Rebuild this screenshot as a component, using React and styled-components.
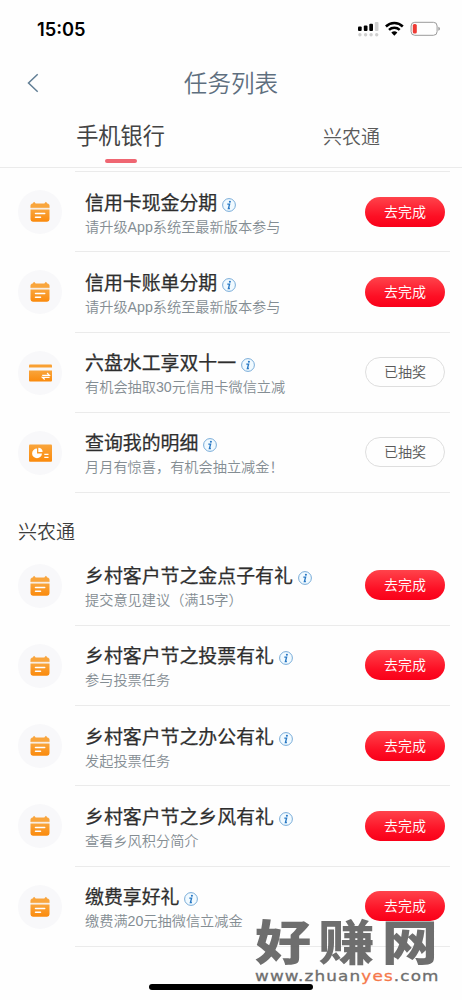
import React from "react";
import styled, { createGlobalStyle } from "styled-components";

const bankTasks = [
    { icon: "calendar", title: "信用卡现金分期", desc: "请升级App系统至最新版本参与" },
    { icon: "calendar", title: "信用卡账单分期", desc: "请升级App系统至最新版本参与" },
    { icon: "card", title: "六盘水工享双十一", desc: "有机会抽取30元信用卡微信立减", done: true },
    { icon: "chart", title: "查询我的明细", desc: "月月有惊喜，有机会抽立减金！", done: true },
];

const villageTasks = [
    { icon: "calendar", title: "乡村客户节之金点子有礼", desc: "提交意见建议（满15字）" },
    { icon: "calendar", title: "乡村客户节之投票有礼", desc: "参与投票任务" },
    { icon: "calendar", title: "乡村客户节之办公有礼", desc: "发起投票任务" },
    { icon: "calendar", title: "乡村客户节之乡风有礼", desc: "查看乡风积分简介" },
    { icon: "calendar", title: "缴费享好礼", desc: "缴费满20元抽微信立减金" },
];

const OrangeGradient = ({ id }) => (
    <defs>
        <linearGradient id={id} x1="0" y1="0" x2="0" y2="1">
            <stop offset="0" stopColor="#f9a53c" />
            <stop offset="1" stopColor="#fb8a0c" />
        </linearGradient>
    </defs>
);

const CalendarIcon = () => (
    <svg width="26" height="26" viewBox="0 0 26 26">
        <OrangeGradient id="calendar" />
        <path
            d="M3.7 8.8V6.6Q3.7 4.8 5.6 4.7L7.1 3l1.7 1.7h8.4L18.9 3l1.5 1.7q1.9.1 1.9 1.9v2.2z"
            fill="#f9a53c"
            stroke="#f9a53c"
            strokeWidth=".4"
            strokeLinejoin="round"
        />
        <path d="M3.5 10.4h19v9.9a2.4 2.4 0 0 1-2.4 2.4H5.9a2.4 2.4 0 0 1-2.4-2.4z" fill="url(#calendar)" />
        <path d="M8.5 14.6h9.2M8.5 18.2h5" stroke="#fff" strokeWidth="1.5" strokeLinecap="round" />
    </svg>
);

const CardIcon = () => (
    <svg width="26" height="26" viewBox="0 0 26 26">
        <OrangeGradient id="card" />
        <path d="M2 7.4V5.5q0-1 1-1h21q1 0 1 1v1.9z" fill="#f9a032" />
        <path d="M2 10.4h23v10.2q0 1-1 1H3q-1 0-1-1z" fill="url(#card)" />
        <path d="M15.2 15.3h7.2l-2.3-2.3M22.6 17.3h-7.2l2.3 2.2" fill="none" stroke="#fff" strokeWidth="1.2" />
    </svg>
);

const ChartIcon = () => (
    <svg width="26" height="26" viewBox="0 0 26 26">
        <OrangeGradient id="chart" />
        <rect x="2" y="4.6" width="23" height="17.2" rx="1" fill="url(#chart)" />
        <path d="M10 8.5a4.9 4.9 0 1 0 4.9 4.9H10z" fill="#fff" />
        <path d="M11.3 7.7a4.5 4.5 0 0 1 4.3 4.4h-4.3z" fill="#fff" />
        <path d="M17.3 14.4h4.2M17.3 17.3h4.2" stroke="#fff" strokeWidth="1.2" />
    </svg>
);

const InfoIcon = () => (
    <svg width="14" height="14" viewBox="0 0 14 14">
        <circle cx="7" cy="7" r="6.4" fill="#f1faff" stroke="#6aa3d4" strokeWidth=".9" />
        <circle cx="7.9" cy="3.7" r="1.05" fill="#2878c4" />
        <path d="M5.3 6.1h2.3L6.4 10.5h1.5" fill="none" stroke="#2878c4" strokeWidth="1.35" />
    </svg>
);

const icons = { calendar: CalendarIcon, card: CardIcon, chart: ChartIcon };

const StatusIcons = () => (
    <svg width="84" height="16" viewBox="0 0 84 16">
        <g fill="#000">
            <rect x="1" y="5.6" width="3.7" height="4.4" rx="1" />
            <rect x="6.8" y="4.4" width="3.7" height="5.6" rx="1" />
            <rect x="12.3" y="2.8" width="3.7" height="7.2" rx="1" />
        </g>
        <g fill="#cfcfcf">
            <rect x="17.8" y="1" width="3.7" height="9" rx="1" />
            <circle cx="2.9" cy="13.8" r="1.7" />
            <circle cx="8.6" cy="13.8" r="1.7" />
            <circle cx="14.1" cy="13.8" r="1.7" />
            <circle cx="19.7" cy="13.8" r="1.7" />
        </g>
        <g fill="none" stroke="#000" strokeWidth="2.5">
            <path d="M28.9 5.5a12.1 12.1 0 0 1 16.9 0" />
            <path d="M32 8.9a7.8 7.8 0 0 1 10.7 0" />
        </g>
        <path d="M34.3 11.6a4.4 4.4 0 0 1 6.1 0l-3.05 3.1z" fill="#000" />
        <rect x="54.1" y="1.3" width="26" height="13" rx="3.7" fill="none" stroke="#9a9a9a" />
        <rect x="55.8" y="3" width="4" height="9.6" rx="1.6" fill="#ee3b35" />
        <path d="M81.3 5.8q1.7.5 1.7 2t-1.7 2z" fill="#9a9a9a" />
    </svg>
);

const TaskList = ({ tasks }) => (
    <List>
        {tasks.map((task) => {
            const Icon = icons[task.icon];

            return (
                <TaskRow key={task.title}>
                    <IconCircle>
                        <Icon />
                    </IconCircle>
                    <TaskBody>
                        <TaskText>
                            <TaskTitle>
                                {task.title}
                                <InfoIcon />
                            </TaskTitle>
                            <TaskDesc>{task.desc}</TaskDesc>
                        </TaskText>
                        <ActionButton $done={task.done}>{task.done ? "已抽奖" : "去完成"}</ActionButton>
                    </TaskBody>
                </TaskRow>
            );
        })}
    </List>
);

const App = () => {
    return (
        <Screen>
            <GlobalStyle />
            <StatusBar>
                <Clock>15:05</Clock>
                <StatusIcons />
            </StatusBar>
            <NavBar>
                <BackButton aria-label="返回">
                    <svg width="12" height="20" viewBox="0 0 12 20">
                        <path d="M10.7 1.2 1.5 10l9.2 8.8" fill="none" stroke="#617e95" strokeWidth="1.5" />
                    </svg>
                </BackButton>
                <PageTitle>任务列表</PageTitle>
            </NavBar>
            <Tabs>
                <Tab $active>手机银行</Tab>
                <Tab>兴农通</Tab>
            </Tabs>
            <ListTop />
            <TaskList tasks={bankTasks} />
            <SectionTitle>兴农通</SectionTitle>
            <TaskList tasks={villageTasks} />
            <HomeIndicator />
            <Watermark>
                <Brand>好赚网</Brand>
                <Site>
                    www.zhuan<em>yes</em>.com
                </Site>
            </Watermark>
        </Screen>
    );
};

const GlobalStyle = createGlobalStyle`
    * {
        box-sizing: border-box;
    }

    body {
        margin: 0;
        background: #fefefe;
        font-family: "Liberation Sans", "Noto Sans CJK SC", sans-serif;
    }

    svg {
        display: block;
        flex-shrink: 0;
    }
`;

const Screen = styled.main`
    position: relative;
    width: 462px;
    height: 1000px;
    overflow: hidden;
    background: #fefefe;
`;

const StatusBar = styled.header`
    height: 58px;
    padding: 0 21px 0 37px;
    display: flex;
    align-items: center;
    justify-content: space-between;
`;

const Clock = styled.span`
    font-family: Inter, sans-serif;
    font-size: 18.3px;
    font-weight: 600;
    color: #000;
`;

const NavBar = styled.nav`
    height: 50px;
    display: grid;
    grid-template-columns: 60px 1fr 60px;
    align-items: center;
`;

const BackButton = styled.button`
    padding: 0 0 0 27px;
    border: 0;
    background: none;
`;

const PageTitle = styled.h1`
    margin: 0;
    padding-top: 2px;
    font-size: 23.6px;
    font-weight: 350;
    line-height: 34px;
    text-align: center;
    color: #5e6f7f;
`;

const Tabs = styled.div`
    height: 60px;
    display: grid;
    grid-template-columns: 241px 221px;
    border-bottom: 1px solid #ebebeb;
`;

const Tab = styled.div`
    display: flex;
    flex-direction: column;
    align-items: center;
    justify-content: space-between;
    padding: ${({ $active }) => ($active ? "13px" : "14px")} 0 4px;
    font-size: ${({ $active }) => ($active ? "22.2px" : "19px")};
    font-weight: ${({ $active }) => ($active ? 400 : 350)};
    line-height: 32px;
    color: ${({ $active }) => ($active ? "#444" : "#5a5a5a")};

    &::after {
        content: "";
        width: 32px;
        height: 4px;
        border-radius: 2px;
        background: ${({ $active }) => ($active ? "#ef6672" : "transparent")};
    }
`;

const ListTop = styled.div`
    height: 4px;
    margin: 0 12px 0 75px;
    border-bottom: 1px solid #ebebeb;
`;

const List = styled.div`
    display: flex;
    flex-direction: column;
`;

const TaskRow = styled.div`
    height: 80.25px;
    padding: 0 12px 0 18px;
    display: flex;
    align-items: center;
    gap: 13px;
`;

const IconCircle = styled.div`
    width: 44px;
    height: 44px;
    border-radius: 50%;
    background: #f8f8fa;
    display: flex;
    align-items: center;
    justify-content: center;
`;

const TaskBody = styled.div`
    flex: 1;
    height: 100%;
    padding: 0 5px 0 10px;
    display: flex;
    align-items: center;
    justify-content: space-between;
    border-bottom: 1px solid #ebebeb;
`;

const TaskText = styled.div`
    padding-top: 6px;
    white-space: nowrap;
`;

const TaskTitle = styled.div`
    display: flex;
    align-items: center;
    gap: 5px;
    font-size: 18.9px;
    font-weight: 400;
    line-height: 25px;
    color: #2e2e2e;
    -webkit-text-stroke: 0.25px currentColor;

    svg {
        margin-top: 3px;
    }
`;

const TaskDesc = styled.div`
    font-size: 14.2px;
    font-weight: 350;
    line-height: 23px;
    color: #848d93;
`;

const ActionButton = styled.button`
    width: 80px;
    height: 30px;
    padding: 0;
    border: ${({ $done }) => ($done ? "1px solid #dedede" : "0")};
    border-radius: 15px;
    background: ${({ $done }) => ($done ? "#fefefe" : "linear-gradient(#ff434b, #fd0f24 65%, #f90019)")};
    color: ${({ $done }) => ($done ? "#5a5a5a" : "#fff")};
    font-family: inherit;
    font-size: 14px;
    font-weight: 350;
    line-height: 28px;
`;

const SectionTitle = styled.h2`
    height: 52.5px;
    margin: 0;
    padding: 23px 0 0 18px;
    font-size: 19px;
    font-weight: 350;
    line-height: 34px;
    color: #3c3c3c;
`;

const HomeIndicator = styled.div`
    position: absolute;
    left: 149px;
    bottom: 10px;
    width: 164px;
    height: 6px;
    border-radius: 3px;
    background: #000;
`;

/* site stamp laid over the bottom right corner */
const Watermark = styled.div`
    position: absolute;
    left: 255px;
    top: 919px;
    color: #666;
    opacity: 0.94;
    white-space: nowrap;
`;

const Brand = styled.div`
    height: 48px;
    font-size: 48px;
    font-weight: 900;
    line-height: 50px;
    letter-spacing: 6.2px;
    transform: scaleX(1.17);
    transform-origin: left;
`;

const Site = styled.div`
    font-family: "DejaVu Sans", sans-serif;
    font-size: 14px;
    line-height: 18px;
    letter-spacing: 0.95px;
    transform: scaleX(1.2);
    transform-origin: left;
    -webkit-text-stroke: 0.3px currentColor;

    em {
        font-style: normal;
        color: #f5703f;
    }
`;

export default App;
